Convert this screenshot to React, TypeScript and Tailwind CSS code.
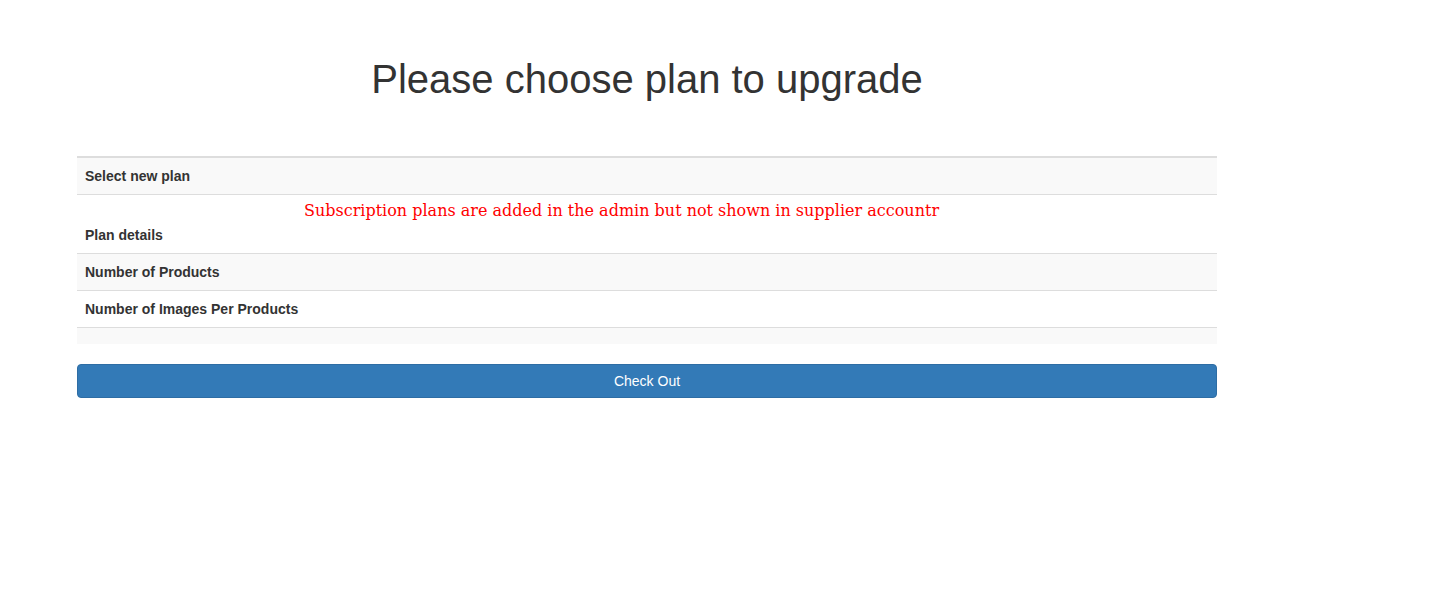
export default function App() {
  const rowText = "text-[14px] font-bold text-[#333] leading-[20px]";
  return (
    <div className="min-h-[594px] bg-white font-['Liberation_Sans',Arial,sans-serif] text-[#333]">
      <div className="ml-[77px] w-[1140px] pt-[52px]">
        <h1 className="text-center text-[40px] leading-[54px] font-normal text-[#333]">
          Please choose plan to upgrade
        </h1>

        <table className="mt-[50px] w-full border-collapse">
          <tbody>
            <tr className="border-t-2 border-[#ddd] bg-[#f9f9f9]">
              <td className={`p-2 ${rowText}`}>Select new plan</td>
            </tr>
            <tr className="border-t border-[#ddd] bg-white">
              <td className={`p-2 ${rowText}`}>
                <div className="mb-[6px] pl-[219px] font-['DejaVu_Serif',serif] text-[16px] font-normal leading-[16px] text-[#ff0000]">
                  Subscription plans are added in the admin but not shown in supplier accountr
                </div>
                <div>Plan details</div>
              </td>
            </tr>
            <tr className="border-t border-[#ddd] bg-[#f9f9f9]">
              <td className={`p-2 ${rowText}`}>Number of Products</td>
            </tr>
            <tr className="border-t border-[#ddd] bg-white">
              <td className={`p-2 ${rowText}`}>Number of Images Per Products</td>
            </tr>
            <tr className="border-t border-[#ddd] bg-[#f9f9f9]">
              <td className="h-[16px] p-0"></td>
            </tr>
          </tbody>
        </table>

        <button className="mt-[20px] block h-[34px] w-full rounded-[4px] border border-[#2e6da4] bg-[#337ab7] pt-px text-[14px] text-white">
          Check Out
        </button>
      </div>
    </div>
  );
}
